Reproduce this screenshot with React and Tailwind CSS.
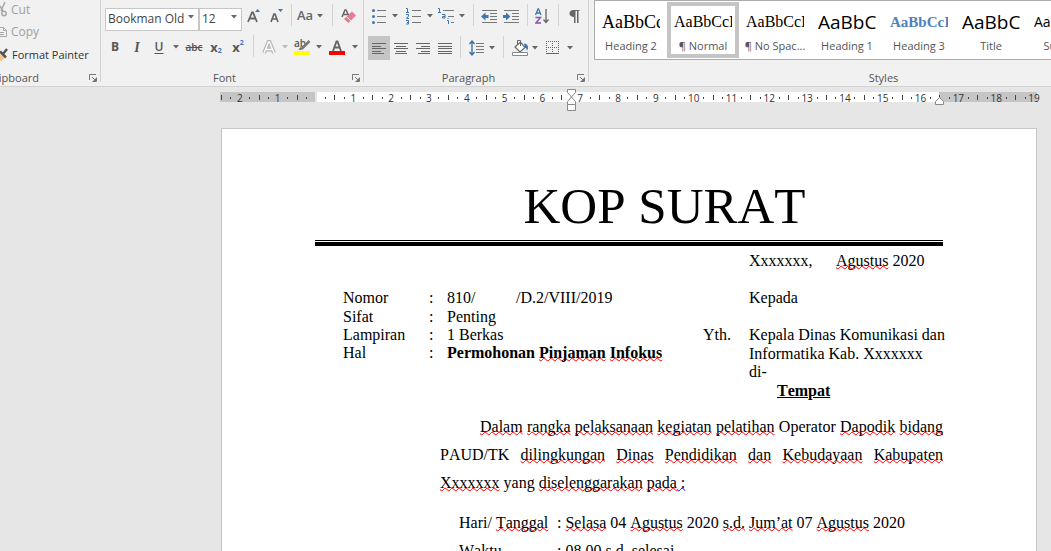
import React from "react";
import clsx from "clsx";

const SERIF = "font-['Liberation_Serif',serif]";
const SANS = "font-['Open_Sans',sans-serif]";

function Tool({ label, width = "w-5.5", active, children, className }) {
  return (
    <button
      type="button"
      aria-label={label}
      className={clsx("flex h-6 shrink-0 items-center justify-center", width, active && "bg-[#c5c5c5]", className)}
    >
      {children}
    </button>
  );
}

function Caret({ className = "text-[#666]" }) {
  return (
    <svg width="6" height="4" viewBox="0 0 6 4" className={clsx("shrink-0", className)} fill="currentColor">
      <path d="M0 0h6L3 3.6z" />
    </svg>
  );
}

function Sep({ width }) {
  return (
    <div className={clsx("flex h-6 shrink-0 justify-center", width)}>
      <div className="h-5.5 w-px bg-[#d2d2d2]" />
    </div>
  );
}

function Lines({ rows }) {
  return (
    <svg width="14" height="13" viewBox="0 0 14 13" shapeRendering="crispEdges" fill="#666">
      {rows.map(([x, w], i) => (
        <rect key={i} x={x} y={1 + Math.round(i * 2.5)} width={w} height="1" />
      ))}
    </svg>
  );
}

function Launcher() {
  return (
    <button type="button" aria-label="More options" className="absolute right-1 bottom-1">
      <svg width="8" height="8" viewBox="0 0 8 8" fill="none" stroke="#777">
        <path d="M.5 6V.5H7" />
        <path d="M3 3l3.500 3.500M7.500 3.500V7.500H3.500" />
        <path d="M7 4v3H4z" fill="#777" stroke="none" />
      </svg>
    </button>
  );
}

function Group({ name, width, children }) {
  return (
    <section className={clsx("relative flex h-[86px] shrink-0 flex-col", width)}>
      <div className="h-[70px] pl-1 pt-1">{children}</div>
      <h2 className="text-center text-[11px] leading-4 text-[#555]">{name}</h2>
      <Launcher />
      <div className="absolute right-0 top-0 h-[82px] w-px bg-[#d2d2d2]" />
    </section>
  );
}

function Combo({ label, value, width }) {
  return (
    <div className={clsx("relative mt-px h-[23px] shrink-0", width)}>
      <select
        aria-label={label}
        className="h-[23px] w-full appearance-none border border-[#c6c6c6] bg-white pl-[2px] text-[12px] leading-5 text-[#444]"
      >
        <option>{value}</option>
      </select>
      <Caret className="pointer-events-none absolute right-[5px] top-2.5 text-[#666]" />
    </div>
  );
}

function Clipboard() {
  return (
    <section className="relative h-[86px] w-[101px] shrink-0 overflow-hidden text-[12px] text-[#444]">
      <div className="flex h-[70px] flex-col">
        <button type="button" className="flex h-[19px] items-center gap-1 leading-4 text-[#a0a0a0]">
          <svg width="7" height="16" viewBox="0 0 7 16" fill="none" stroke="#a8a8a8" strokeWidth="1.500">
            <path d="M5 0L1 9M0 4l3 5" />
            <circle cx="4" cy="11.500" r="2.200" />
          </svg>
          Cut
        </button>
        <button type="button" className="flex h-[26px] items-center gap-1 leading-4 text-[#a0a0a0]">
          <svg width="7" height="12" viewBox="0 0 7 12" fill="none" stroke="#a8a8a8">
            <path d="M0 1.500h3.500l3 3v6H0M3.500 1.500v3h3M0 6.500h4M0 8.500h4" />
          </svg>
          Copy
        </button>
        <button type="button" className="flex h-5 items-center gap-1 whitespace-nowrap text-[11px] leading-4 text-[#333]">
          <svg width="8" height="14" viewBox="0 0 8 14">
            <path d="M0 6l4.500 4L1.500 13H0z" fill="#f3c583" />
            <path d="M0 3.500l6 6M3 6l4-5" stroke="#555" strokeWidth="2.500" />
          </svg>
          Format Painter
        </button>
      </div>
      <h2 className="flex w-[39px] justify-end text-[11px] leading-4 text-[#555]">Clipboard</h2>
      <Launcher />
      <div className="absolute right-0 top-0 h-[82px] w-px bg-[#d2d2d2]" />
    </section>
  );
}

function FontGroup() {
  return (
    <Group name="Font" width="w-[263px] pr-4">
      <div className="flex">
        <Combo label="Font name" value="Bookman Old" width="w-[94px]" />
        <Combo label="Font size" value="12" width="w-[43px]" />
        <Tool label="Grow font" width="w-6">
          <svg width="14" height="16" viewBox="0 0 14 16" fill="none">
            <path d="M1 14L5 4.500h1L10 14M2.500 10.500h6" stroke="#666" strokeWidth="1.800" />
            <path d="M8 4l2.500-3L13 4z" fill="#3f75b1" />
          </svg>
        </Tool>
        <Tool label="Shrink font">
          <svg width="14" height="16" viewBox="0 0 14 16" fill="none">
            <path d="M1 14l3-8h1l3 8M2 11h5" stroke="#666" strokeWidth="1.700" />
            <path d="M8 1h5l-2.500 3z" fill="#3f75b1" />
          </svg>
        </Tool>
        <Sep width="w-1.5" />
        <Tool label="Change case" className="text-[13px] font-semibold text-[#666]">Aa</Tool>
        <Tool label="Case options" width="w-2"><Caret /></Tool>
        <Sep width="w-4" />
        <Tool label="Clear formatting" width="w-4.5">
          <svg width="16" height="16" viewBox="0 0 16 16" fill="none" className="shrink-0">
            <path d="M1 9l3-7h1l3 6M2.500 6.500h4" stroke="#666" strokeWidth="1.500" />
            <path d="M11 3.500l4 4-7.500 7.500-4.500-4z" fill="#e67a92" />
            <path d="M5.500 8.500l4.500 4.500" stroke="#f1f1f1" />
          </svg>
        </Tool>
      </div>
      <div className="flex pt-[7px] text-[#555]">
        <Tool label="Bold" width="w-5" className="text-[12px] font-bold">B</Tool>
        <Tool label="Italic" width="w-6" className="font-['Liberation_Serif',serif] text-[14px] font-bold italic">I</Tool>
        <Tool label="Underline" width="w-5" className="text-[12px] font-semibold underline underline-offset-2">U</Tool>
        <Tool label="Underline style" width="w-3.5"><Caret /></Tool>
        <Tool label="Strikethrough" className="text-[10px] font-semibold line-through">abc</Tool>
        <Tool label="Subscript" className="text-[13px] leading-4 font-bold">
          x<span className="pt-2 text-[7px] leading-2 text-[#3f75b1]">2</span>
        </Tool>
        <Tool label="Superscript" className="text-[13px] leading-4 font-bold">
          x<span className="pb-2 text-[7px] leading-2 text-[#3f75b1]">2</span>
        </Tool>
        <Sep width="w-2" />
        <Tool label="Text effects" width="w-6">
          <svg width="14" height="15" viewBox="0 0 14 15" fill="none">
            <path d="M2 13L6.500 2h1L12 13M4 9.500h6" stroke="#b5b5b5" strokeWidth="3.800" />
            <path d="M2 13L6.500 2h1L12 13M4 9.500h6" stroke="#fff" strokeWidth="1.400" />
          </svg>
        </Tool>
        <Tool label="Effect options" width="w-2"><Caret className="text-[#bbb]" /></Tool>
        <Tool label="Highlight colour" width="w-6.5">
          <svg width="17" height="17" viewBox="0 0 17 17">
            <text x="0" y="8" fontSize="10" fontWeight="600" fill="#555">ab</text>
            <path d="M15.500 2L8 9.500" stroke="#777" strokeWidth="2.500" />
            <path d="M4.500 11l2-3 2.500 2.500z" fill="#666" />
            <path d="M0 12h16v4H0z" fill="#ff0" />
          </svg>
        </Tool>
        <Tool label="Highlight options" width="w-2"><Caret /></Tool>
        <Tool label="Font colour" width="w-7">
          <svg width="16" height="17" viewBox="0 0 16 17" fill="none">
            <path d="M4 12L7.500 2.500h1L12 12M5.500 8.500h5" stroke="#666" strokeWidth="1.900" />
            <path d="M0 12h16v4H0z" fill="#f00" />
          </svg>
        </Tool>
        <Tool label="Font colour options" width="w-2"><Caret /></Tool>
      </div>
    </Group>
  );
}

function IndentIcon({ right }) {
  return (
    <svg width="16" height="13" viewBox="0 0 16 13" className="shrink-0">
      <path d="M1 .5h15M9 3.500h7M9 6.500h7M9 9.500h7M1 12.500h15" stroke="#777" />
      <path
        d={right ? "M0 5h3V2.500L7.500 6.500 3 10.500V8H0z" : "M7.500 5h-3V2.500L0 6.500l4.500 4V8h3z"}
        fill="#3f75b1"
      />
    </svg>
  );
}

function ParagraphGroup() {
  return (
    <Group name="Paragraph" width="w-[225px] pr-4">
      <div className="flex">
        <Tool label="Bullets">
          <svg width="14" height="16" viewBox="0 0 14 16">
            <path d="M5 2.500h9M5 8.500h9M5 14.500h9" stroke="#777" />
            <g fill="#3f75b1">
              <circle cx="1.500" cy="2.500" r="1.500" />
              <circle cx="1.500" cy="8.500" r="1.500" />
              <circle cx="1.500" cy="14.500" r="1.500" />
            </g>
          </svg>
        </Tool>
        <Tool label="Bullet options" width="w-2.5"><Caret /></Tool>
        <Tool label="Numbering" width="w-6.5">
          <svg width="15" height="18" viewBox="0 0 15 18">
            <path d="M6 3.500h9M6 9.500h9M6 15.500h9" stroke="#777" />
            <path
              d="M0 1.500h1.500V5M0 5.500h3M0 7.500h2.500v1.500L.5 11.500H3M0 13.500h2.500v3.500H0M1 15.500h1.500"
              fill="none"
              stroke="#3f75b1"
            />
          </svg>
        </Tool>
        <Tool label="Numbering options" width="w-2"><Caret /></Tool>
        <Tool label="Multilevel list" width="w-6">
          <svg width="17" height="18" viewBox="0 0 17 18" fill="none">
            <path d="M5 3.500h11M10 9.500h6M13 15.500h3" stroke="#777" />
            <path
              d="M0 1.500h1.500V5M0 5.500h3M4 7.500h3V11H4.500V9.500h2.500M9 13.500h1.500V17M10 11v1"
              stroke="#3f75b1"
            />
          </svg>
        </Tool>
        <Tool label="Multilevel options" width="w-2"><Caret /></Tool>
        <Sep width="w-3.5" />
        <Tool label="Decrease indent" width="w-4.5"><IndentIcon /></Tool>
        <Tool label="Increase indent" width="w-6.5"><IndentIcon right /></Tool>
        <Sep width="w-1.5" />
        <Tool label="Sort" width="w-6">
          <svg width="14" height="16" viewBox="0 0 14 16" fill="none">
            <path d="M.5 7L3 .8h.5L6 7M1.500 5h3.500" stroke="#3f75b1" strokeWidth="1.300" />
            <path d="M.5 9.500h5L1 15h5" stroke="#8c4fab" strokeWidth="1.400" />
            <path d="M11 1v13M8.500 11.500L11 14.500l2.500-3" stroke="#666" strokeWidth="1.300" />
          </svg>
        </Tool>
        <Sep width="w-2" />
        <Tool label="Show paragraph marks" width="w-6">
          <svg width="11" height="13" viewBox="0 0 11 13">
            <path d="M10.500 0v1H9.500v12H8V1H6.500v12H5V7C2.500 7 .5 5.500.5 3.500S2 0 4.500 0z" fill="#666" />
          </svg>
        </Tool>
      </div>
      <div className="flex pt-2">
        <Tool label="Align left" active><Lines rows={[[0, 14], [0, 9], [0, 14], [0, 9], [0, 12]]} /></Tool>
        <Tool label="Center"><Lines rows={[[0, 14], [2, 10], [0, 14], [2, 10], [1, 12]]} /></Tool>
        <Tool label="Align right"><Lines rows={[[0, 14], [5, 9], [0, 14], [5, 9], [2, 12]]} /></Tool>
        <Tool label="Justify"><Lines rows={[[0, 14], [0, 14], [0, 14], [0, 14], [0, 14]]} /></Tool>
        <Sep width="w-2" />
        <Tool label="Line spacing" width="w-6">
          <svg width="15" height="16" viewBox="0 0 15 16" fill="none">
            <path d="M7 3.500h8M7 6.500h8M7 9.500h8M7 12.500h8" stroke="#777" />
            <path d="M3 1v14M.5 4L3 1l2.500 3M.5 12L3 15l2.500-3" stroke="#3f75b1" strokeWidth="1.400" />
          </svg>
        </Tool>
        <Tool label="Spacing options" width="w-2"><Caret /></Tool>
        <Sep width="w-3.5" />
        <Tool label="Shading" width="w-5">
          <svg width="17" height="16" viewBox="0 0 17 16">
            <path d="M3 7l5.500-5 4.500 5.500L8 12z" fill="#fff" stroke="#666" strokeWidth="1.200" />
            <path d="M5.500 5V.5h3V6" fill="none" stroke="#666" />
            <path d="M12 3.500c4 .5 5 3.500 3 7.500-.5-3-1-3-2-3z" fill="#3f75b1" />
            <path d="M.5 12.500h15v3H.5z" fill="#fff" stroke="#888" />
          </svg>
        </Tool>
        <Tool label="Shading options" width="w-2.5"><Caret /></Tool>
        <Tool label="Borders" width="w-6.5">
          <svg width="14" height="14" viewBox="0 0 14 14" fill="none" stroke="#666">
            <path d="M0 .5h13M0 6.500h13M.5 0v12M6.500 0v12M12.500 0v12" strokeDasharray="1 1" />
            <path d="M0 12.500h13" />
          </svg>
        </Tool>
        <Tool label="Border options" width="w-2"><Caret /></Tool>
      </div>
    </Group>
  );
}

const STYLES = [
  { name: "Heading 2", sample: "AaBbCc", look: "font-['Liberation_Serif',serif] text-[18px] text-black" },
  { name: "¶ Normal", sample: "AaBbCcI", look: "font-['Liberation_Serif',serif] text-[16px] text-black", selected: true },
  { name: "¶ No Spac...", sample: "AaBbCcI", look: "font-['Liberation_Serif',serif] text-[16px] text-black" },
  { name: "Heading 1", sample: "AaBbC", look: "text-[19px] text-black" },
  { name: "Heading 3", sample: "AaBbCcI", look: "font-['Liberation_Serif',serif] text-[15px] font-bold text-[#4f81bd]" },
  { name: "Title", sample: "AaBbC", look: "text-[19px] text-black" },
  { name: "Subtitle", sample: "AaBbCc", look: "text-[14px] text-black" },
];

function StylesGroup() {
  return (
    <section className="h-[86px] min-w-0 flex-1 overflow-hidden pl-[5px]">
      <div className="flex h-[60px] overflow-hidden border border-r-0 border-[#ababab] bg-white">
        {STYLES.map((s) => (
          <button
            type="button"
            key={s.name}
            className={clsx(
              "my-px flex w-18 shrink-0 flex-col items-center border-4",
              s.selected ? "border-[#c5c5c5]" : "border-transparent"
            )}
          >
            <span className={clsx("mt-0.5 h-[30px] w-[58px] overflow-hidden text-left leading-7", s.look)}>
              {s.sample}
            </span>
            <span className="text-[11px] leading-4 whitespace-nowrap text-[#555]">{s.name}</span>
          </button>
        ))}
      </div>
      <h2 className="mt-2.5 pl-[122px] text-center text-[11px] leading-4 text-[#555]">Styles</h2>
    </section>
  );
}

const MARKS = [2, 1, "", 1, 2, 3, 4, 5, 6, 7, 8, 9, 10, 11, 12, 13, 14, 15, 16, 17, 18, 19];

function Ruler() {
  return (
    <div className="relative h-[41px] overflow-hidden pt-[5px] pl-[220px]">
      <div className="flex h-2.5 pr-3.5">
        <div className="mr-0.5 w-[95px] shrink-0 bg-[#c5c5c5]" />
        <div className="flex-1 bg-white" />
        <div className="w-[98px] shrink-0 bg-[#c5c5c5]" />
      </div>
      <div className="absolute top-[5px] right-[-2px] left-[221px] flex h-[11px] text-[10px] text-[#333]">
        {MARKS.map((n, i) => (
          <div key={i} className="grid flex-1 grid-cols-4 items-center">
            <i className="h-[5px] w-px bg-[#444]" />
            <i className="h-0.5 w-px bg-[#444]" />
            <span className="flex w-0 justify-center leading-none">{n}</span>
            {n !== 19 && <i className="h-0.5 w-px bg-[#444]" />}
          </div>
        ))}
      </div>
      <svg className="absolute top-0.5 left-[566px]" width="11" height="23" viewBox="0 0 11 23" fill="#fff" stroke="#888">
        <path d="M1.500.5h8v3l-4 4.500-4-4.500z" />
        <path d="M5.500 8l4 4.500v3h-8v-3z" />
        <path d="M1.500 15.500h8v6h-8z" />
      </svg>
      <svg className="absolute top-2.5 right-[106px]" width="10" height="9" viewBox="0 0 10 9" fill="#fff" stroke="#888">
        <path d="M4.500.5l4 4v3h-8v-3z" />
      </svg>
    </div>
  );
}

// spelling-checked word
function Sp({ children, blue }) {
  return (
    <span
      className={clsx(
        "underline decoration-wavy decoration-1 underline-offset-[-1px] [text-decoration-skip-ink:none]",
        blue ? "decoration-[#00f]" : "decoration-[#f00]"
      )}
    >
      {children}
    </span>
  );
}

function Field({ label, children }) {
  return (
    <div className="flex">
      <dt className="w-[86px]">{label}</dt>
      <dd className="flex">
        <span className="w-[18px]">:</span>
        {children}
      </dd>
    </div>
  );
}

function Letter() {
  return (
    <article
      className={clsx(
        "mr-3.5 ml-[221px] border border-b-0 border-[#c6c6c6] bg-white pr-[93px] pl-[93px] text-[16px] leading-[18px] text-black [font-kerning:none]",
        SERIF
      )}
    >
      <h1 className="pt-[49px] pl-[71px] text-center text-[51px] leading-[56px]">KOP SURAT</h1>
      <div className="mt-[6px] h-1.5 border-t border-b-4 border-black" />
      <div className="flex justify-end pt-[6px]">
        <p className="flex w-[194px]">
          <span className="w-[87px]">Xxxxxxx,</span>
          <span className="whitespace-nowrap"><Sp>Agustus</Sp> 2020</span>
        </p>
      </div>
      <div className="flex pt-[19px] pl-7 whitespace-nowrap">
        <dl className="flex-1">
          <Field label="Nomor">
            <span className="w-[69px]">810/</span>/D.2/VIII/2019
          </Field>
          <div className="h-px" />
          <Field label="Sifat">Penting</Field>
          <Field label="Lampiran">1 Berkas</Field>
          <Field label="Hal">
            <b>Permohonan <Sp>Pinjaman</Sp> <Sp>Infokus</Sp></b>
          </Field>
        </dl>
        <p className="w-[46px] pt-[37px]">Yth.</p>
        <div className="w-[194px]">
          <p className="mb-[19px]">Kepada</p>
          <p>Kepala Dinas Komunikasi dan</p>
          <p className="mt-px">Informatika Kab. Xxxxxxx</p>
          <p>di-</p>
          <p className="mt-px pl-7 font-bold underline">Tempat</p>
        </div>
      </div>
      <p className="mt-[13px] pl-[125px] text-justify indent-10 leading-7">
        <Sp>Dalam</Sp> <Sp>rangka</Sp> <Sp>pelaksanaan</Sp> <Sp>kegiatan</Sp> <Sp>pelatihan</Sp> Operator{" "}
        <Sp>Dapodik</Sp> <Sp>bidang</Sp> PAUD/TK <Sp>dilingkungan</Sp> <Sp>Dinas</Sp> <Sp>Pendidikan</Sp>{" "}
        <Sp>dan</Sp> <Sp>Kebudayaan</Sp> <Sp>Kabupaten</Sp> <Sp>Xxxxxxx</Sp> yang <Sp>diselenggarakan</Sp>{" "}
        <Sp>pada</Sp><Sp blue> :</Sp>
      </p>
      <dl className="mt-3 pl-36 leading-7 whitespace-nowrap">
        <div className="flex">
          <dt className="w-[98px]">Hari/ <Sp>Tanggal</Sp></dt>
          <dd>: <Sp>Selasa</Sp> 04 <Sp>Agustus</Sp> 2020 <Sp>s.d.</Sp> <Sp>Jum’at</Sp> 07 <Sp>Agustus</Sp> 2020</dd>
        </div>
        <div className="flex">
          <dt className="w-[98px]"><Sp>Waktu</Sp></dt>
          <dd>: 08.00 <Sp>s.d.</Sp> <Sp>selesai</Sp></dd>
        </div>
      </dl>
    </article>
  );
}

export default function App() {
  return (
    <div className={clsx("h-screen overflow-hidden bg-[#e6e6e6]", SANS)}>
      <header className="flex h-[87px] border-b border-[#d2d2d2] bg-[#f1f1f1]">
        <Clipboard />
        <FontGroup />
        <ParagraphGroup />
        <StylesGroup />
      </header>
      <Ruler />
      <Letter />
    </div>
  );
}
